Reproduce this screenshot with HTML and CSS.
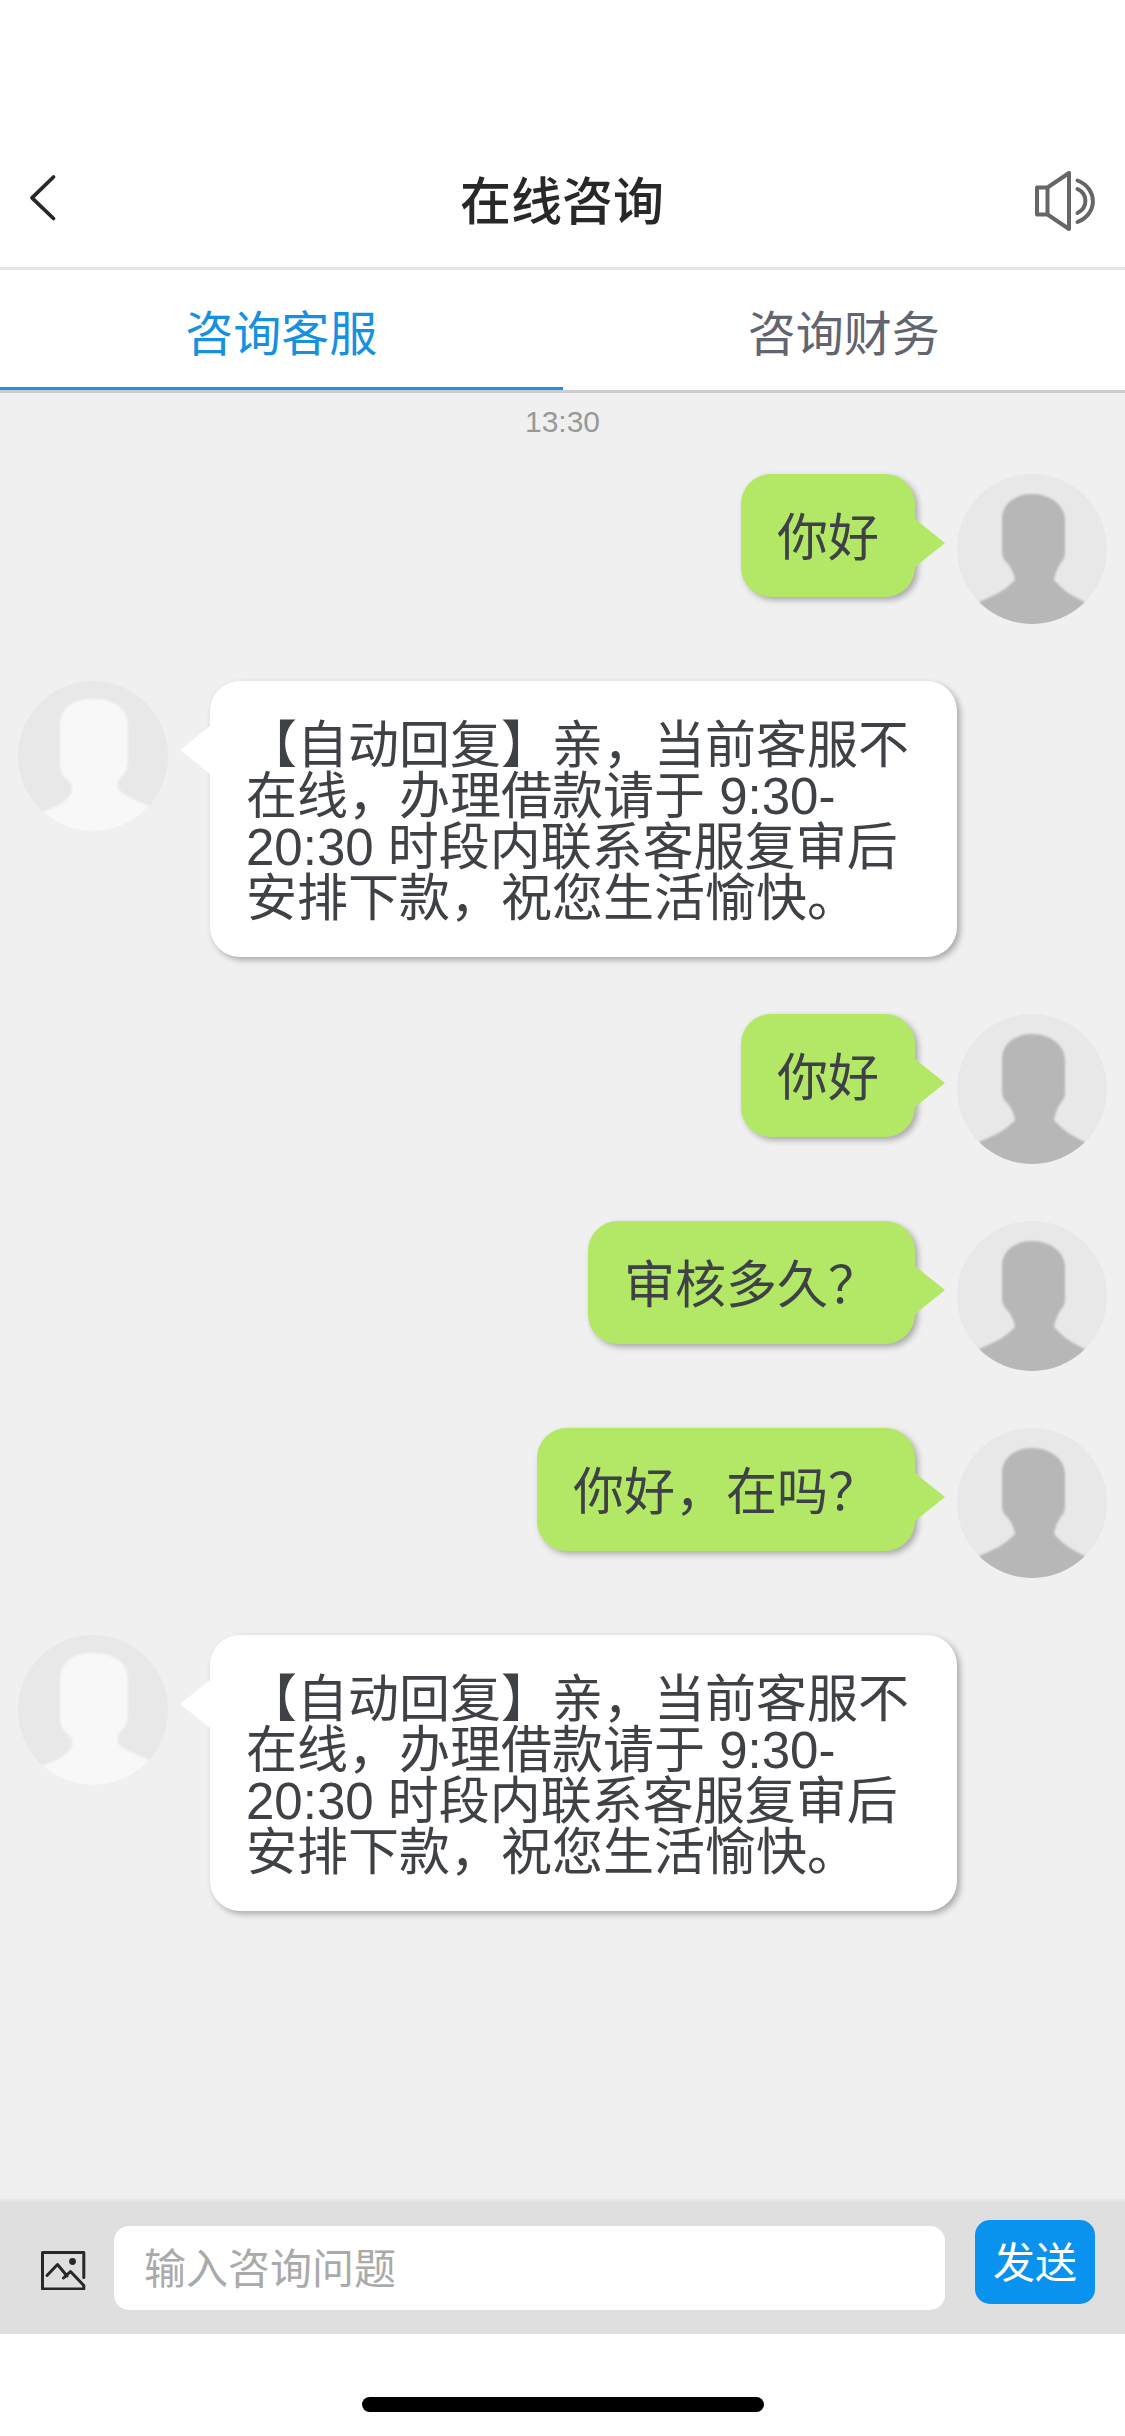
FILE: index.html
```html
<!DOCTYPE html>
<html lang="zh-CN">
<head>
<meta charset="utf-8">
<title>在线咨询</title>
<link rel="stylesheet" href="styles.css">
</head>
<body>
<svg class="defs" aria-hidden="true">
  <defs>
    <filter id="soft"><feGaussianBlur stdDeviation="0.9"/></filter>
    <g id="person-user">
      <path d="M75 20c18 0 33 11 33 26v32c0 7-3 9-5 12-3 5-5 10-6 16 10 11 18 16 31 22v30H22v-30c14-6 26-11 36-22-1-7-4-12-7-16-4-4-6-7-6-13V45c0-15 13-25 30-25z"/>
    </g>
    <g id="person-agent">
      <path d="M74 18c24 0 36 11 36 27v36c0 9-7 15-10 19v8c7 8 18 11 31 17v35H13v-24c16-8 31-10 41-24v-8c-7-8-12-11-12-20V45c0-17 12-27 32-27z"/>
    </g>
  </defs>
</svg>
<div class="app">
  <header class="navbar">
    <svg class="back" viewBox="0 0 40 60"><path d="M33.500 9 12 29.800 33.500 50.500"/></svg>
    <h1 class="title">在线咨询</h1>
    <svg class="speaker" viewBox="0 0 60 60">
      <path d="M2 16.500h10.500v27H2zM12.500 16.500 34 2v56L12.500 43.500"/>
      <path d="M42.500 18c10.500 5 10.500 19 0 24M42.500 9.500c20.500 8 20.500 33.500 0 41.500"/>
    </svg>
  </header>
  <nav class="tabs">
    <a class="tab active">咨询客服</a>
    <a class="tab">咨询财务</a>
  </nav>
  <main class="chat">
    <div class="time">13:30</div>
    <div class="row mine">
      <div class="bubble">你好</div>
      <svg class="avatar" viewBox="0 0 150 150"><use href="#person-user"/></svg>
    </div>
    <div class="row agent">
      <svg class="avatar" viewBox="0 0 150 150"><use href="#person-agent"/></svg>
      <div class="bubble">【自动回复】亲，当前客服不<br>在线，办理借款请于 9:30-<br>20:30 时段内联系客服复审后<br>安排下款，祝您生活愉快。</div>
    </div>
    <div class="row mine">
      <div class="bubble">你好</div>
      <svg class="avatar" viewBox="0 0 150 150"><use href="#person-user"/></svg>
    </div>
    <div class="row mine">
      <div class="bubble">审核多久？</div>
      <svg class="avatar" viewBox="0 0 150 150"><use href="#person-user"/></svg>
    </div>
    <div class="row mine">
      <div class="bubble">你好，在吗？</div>
      <svg class="avatar" viewBox="0 0 150 150"><use href="#person-user"/></svg>
    </div>
    <div class="row agent">
      <svg class="avatar" viewBox="0 0 150 150"><use href="#person-agent"/></svg>
      <div class="bubble">【自动回复】亲，当前客服不<br>在线，办理借款请于 9:30-<br>20:30 时段内联系客服复审后<br>安排下款，祝您生活愉快。</div>
    </div>
  </main>
  <footer class="composer">
    <svg class="picture" viewBox="0 0 46 40">
      <path d="M42.800 27.500V2.500H1.500v36.500h41.300V35.500L29.500 21.500 22.500 28M6 25.500 16.500 14.500 26 26"/>
      <circle cx="31.500" cy="11.500" r="3.400"/>
    </svg>
    <div class="field">输入咨询问题</div>
    <button class="send">发送</button>
  </footer>
  <div class="home"><span class="indicator"></span></div>
</div>
</body>
</html>
```
FILE: styles.css
```css
* { box-sizing: border-box; }

body {
  margin: 0;
  background: #fff;
  font-family: "Liberation Sans", "Noto Sans CJK SC", sans-serif;
}

.defs { position: absolute; width: 0; height: 0; }

.app {
  display: flex;
  flex-direction: column;
  width: 1125px;
  height: 2436px;
}

.navbar {
  display: grid;
  grid-template-columns: 60px 1fr 60px;
  align-items: center;
  height: 270px;
  padding: 132px 30px 0 20px;
  border-bottom: 3px solid #e6e6e6;
}

.back { width: 40px; height: 60px; margin-bottom: 3px; }
.back path { fill: none; stroke: #282828; stroke-width: 3.8; stroke-linecap: round; stroke-linejoin: round; }

.title {
  margin: 6px 0 0;
  padding-left: 9px;
  text-align: center;
  font-size: 51px;
  line-height: 60px;
  font-weight: 500;
  color: #282828;
}

.speaker { width: 60px; height: 60px; margin-top: 3px; }
.speaker path { fill: none; stroke: #666; stroke-width: 4; stroke-linecap: round; stroke-linejoin: round; }

.tabs {
  display: flex;
  height: 123px;
  border-bottom: 3px solid #cdcdcf;
}

.tab {
  flex: 1;
  height: 120px;
  border-bottom: 3px solid transparent;
  text-align: center;
  font-size: 48px;
  line-height: 130px;
  color: #62656f;
}

.tab.active { color: #1890e0; border-bottom-color: #1d90e0; }

.chat {
  flex: 1;
  display: flex;
  flex-direction: column;
  gap: 57px;
  padding: 12px 18px 0;
  background: #f0f0f0;
}

.time {
  height: 36px;
  margin-bottom: -24px;
  text-align: center;
  font-size: 30px;
  line-height: 34px;
  color: #999;
}

.row { display: flex; align-items: flex-start; }
.row.mine { justify-content: flex-end; gap: 42px; }
.row.agent { gap: 42px; }

.avatar {
  flex: none;
  width: 150px;
  height: 150px;
  border-radius: 50%;
  background: #e8e8e8;
}

.avatar use { filter: url(#soft); }
.mine .avatar { fill: #b7b7b7; }
.agent .avatar { fill: #f8f8f8; }

.bubble {
  position: relative;
  padding: 39px 36px 33px;
  border-radius: 30px;
  font-size: 51px;
  line-height: 51px;
  white-space: nowrap;
  color: #3e4145;
  box-shadow: 3px 3px 6px rgba(0, 0, 0, .3);
}

.mine .bubble { background: #b2e866; }
.agent .bubble { width: 747px; background: #fff; }

.bubble::after {
  content: "";
  position: absolute;
  top: 45px;
  border: 24px solid transparent;
}

.mine .bubble::after { left: 100%; border-left: 30px solid #b2e866; border-right: 0; }
.agent .bubble::after { right: 100%; border-right: 30px solid #fff; border-left: 0; }

.composer {
  display: flex;
  align-items: center;
  height: 135px;
  padding: 0 30px 0 41px;
  border-top: 3px solid #e6e6e6;
  background: #dfdfdf;
}

.picture { width: 46px; height: 40px; margin-top: 4px; }
.picture path { fill: none; stroke: #282828; stroke-width: 3; stroke-linecap: round; stroke-linejoin: round; }
.picture circle { fill: #282828; }

.field {
  width: 831px;
  height: 84px;
  margin-left: 27px;
  padding-left: 30px;
  border-radius: 15px;
  background: #fff;
  font-size: 42px;
  line-height: 87px;
  color: #aaa;
}

.send {
  width: 120px;
  height: 84px;
  margin: 0 0 12px 30px;
  padding: 3px 0 0;
  border: 0;
  border-radius: 15px;
  background: #0a93ee;
  font-family: inherit;
  font-size: 42px;
  line-height: 81px;
  color: #fff;
}

.home {
  display: flex;
  justify-content: center;
  height: 102px;
  padding-top: 63px;
}

.indicator { width: 402px; height: 15px; border-radius: 8px; background: #000; }
```
